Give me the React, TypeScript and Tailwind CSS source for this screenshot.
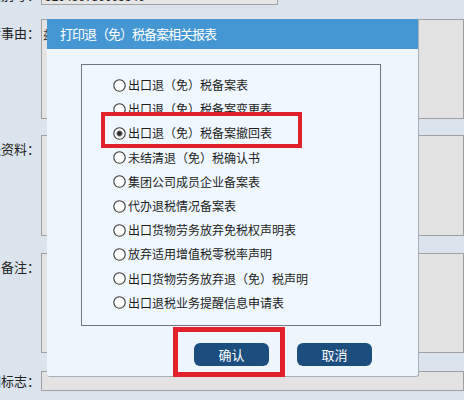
import React from 'react';

const items = [
  '出口退（免）税备案表',
  '出口退（免）税备案变更表',
  '出口退（免）税备案撤回表',
  '未结清退（免）税确认书',
  '集团公司成员企业备案表',
  '代办退税情况备案表',
  '出口货物劳务放弃免税权声明表',
  '放弃适用增值税零税率声明',
  '出口货物劳务放弃退（免）税声明',
  '出口退税业务提醒信息申请表',
];

function Radio({ checked }: { checked?: boolean }) {
  return (
    <svg width="13" height="13" viewBox="0 0 13 13" className="shrink-0">
      <circle cx="6.5" cy="6.5" r="5.7" fill="#ffffff" stroke="#3a3a3a" strokeWidth="1.1" />
      {checked && <circle cx="6.5" cy="6.5" r="2.8" fill="#2f2f2f" stroke="#9a9a9a" strokeWidth="0.8" />}
    </svg>
  );
}

function Label({ text, top }: { text: string; top?: boolean }) {
  return (
    <div
      className={`w-[41px] shrink-0 flex justify-end overflow-hidden whitespace-nowrap pr-[8px] text-[13px] text-[#222] ${
        top ? 'items-start pt-[4px]' : 'items-center'
      }`}
    >
      <span className="shrink-0">{text}</span>
      <span className="shrink-0 inline-block w-[6px] overflow-visible">：</span>
    </div>
  );
}

export default function App() {
  return (
    <div
      className="relative w-[464px] h-[400px] overflow-hidden bg-[#dbe4ec]"
      style={{ fontFamily: '"Microsoft YaHei", "Noto Sans CJK SC", sans-serif' }}
    >
      {/* form behind the dialog */}
      <div className="flex flex-col mt-[-16px]">
        <div className="flex h-[21px]">
          <Label text="纳税人识别号" />
          <div className="w-[237px] border border-[#a3a3a3] bg-[#e6e6e6] text-[12px] leading-[14px] text-[#222] px-[3px] pt-[4px] overflow-hidden">
            320456780005540
          </div>
        </div>
        <div className="flex h-[100px] mt-[14px]">
          <Label text="申请事由" top />
          <div className="w-[440px] border border-[#a0a0a0] bg-[#e3e3e3] text-[12px] text-[#333] px-[1px] pt-[6px]">兹</div>
        </div>
        <div className="flex h-[101px] mt-[16px]">
          <Label text="附送资料" top />
          <div className="w-[440px] border border-[#a0a0a0] bg-[#e3e3e3]" />
        </div>
        <div className="flex h-[100px] mt-[17px]">
          <Label text="备注" top />
          <div className="w-[440px] border border-[#a0a0a0] bg-[#e3e3e3]" />
        </div>
        <div className="flex h-[20px] mt-[18px]">
          <Label text="撤回标志" />
          <div className="w-[440px] border border-[#a0a0a0] bg-[#e3e3e3]" />
        </div>
      </div>

      {/* dialog */}
      <div className="absolute left-[47px] top-[19px] w-[372px] h-[358px] bg-[#eef5fd] border-r border-b border-[#a7afb8] rounded-b-[3px] flex flex-col">
        <div className="h-[30px] shrink-0 bg-[#4597d3] flex items-center pl-[13px] text-white text-[13px] tracking-[-1px]">
          打印退（免）税备案相关报表
        </div>
        <div className="ml-[34px] mt-[15px] w-[300px] h-[262px] border border-[#6f7780] bg-[#f0f7ff] pt-[8px] pl-[31px]">
          {items.map((t, i) => (
            <div key={t} className="h-[24.2px] flex items-center gap-[2px] text-[12px] text-[#1c1c1c]">
              <Radio checked={i === 2} />
              <span>{t}</span>
            </div>
          ))}
        </div>
        <div className="flex justify-end gap-[28px] pr-[46px] mt-[17px]">
          <button className="w-[75px] h-[23px] rounded-[6px] bg-[#1b4e7e] text-white text-[13px] flex items-center justify-center">
            确认
          </button>
          <button className="w-[75px] h-[23px] rounded-[6px] bg-[#1b4e7e] text-white text-[13px] flex items-center justify-center">
            取消
          </button>
        </div>

        {/* highlight boxes */}
        <div className="absolute left-[54px] top-[93px] w-[201px] h-[36px] border-[4px] border-[#e2222a]" />
        <div className="absolute left-[126px] top-[308px] w-[112px] h-[50px] border-[5px] border-[#e2222a]" />
      </div>
    </div>
  );
}
